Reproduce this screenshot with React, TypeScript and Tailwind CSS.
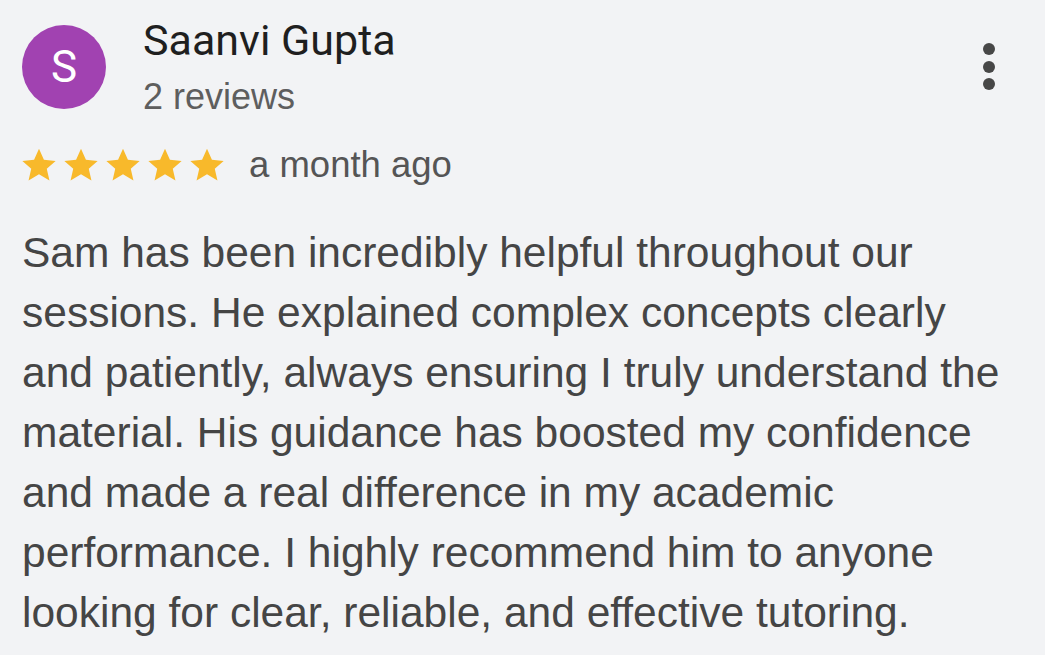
const Star = () => (
  <svg viewBox="0 0 24 24" className="w-[38px] h-[38px]" fill="#f8b92b">
    <path d="M12 1.8l3.1 6.9 7.4.7-5.6 5 1.7 7.4L12 17.9l-6.6 3.9 1.7-7.4-5.6-5 7.4-.7z" />
  </svg>
);

export default function App() {
  return (
    <div className="w-[1045px] h-[655px] bg-[#f2f3f5] overflow-hidden pl-[22px] pt-[25px] [font-family:'Liberation_Sans',Arial,sans-serif]">
      <div className="flex items-start">
        <div className="w-[84px] h-[84px] rounded-full bg-[#a142b1] flex items-center justify-center text-white text-[44px] [font-family:Roboto,sans-serif] leading-none">
          S
        </div>
        <div className="ml-[37px] flex-1">
          <div className="text-[43px] leading-[48px] text-[#1f1f1f] [font-family:Roboto,sans-serif] -mt-[9px]">Saanvi Gupta</div>
          <div className="text-[36px] leading-[40px] text-[#5e5e5e] mt-[13px]">2 reviews</div>
        </div>
        <div className="mr-[50px] mt-[18px] flex flex-col gap-[5.5px]">
          <span className="w-[12px] h-[12px] rounded-full bg-[#474747]" />
          <span className="w-[12px] h-[12px] rounded-full bg-[#474747]" />
          <span className="w-[12px] h-[12px] rounded-full bg-[#474747]" />
        </div>
      </div>
      <div className="flex items-center mt-[28px]">
        <div className="flex gap-[4px] -ml-[2px]">
          <Star />
          <Star />
          <Star />
          <Star />
          <Star />
        </div>
        <span className="ml-[23px] text-[36.5px] leading-[40px] text-[#555555]">a month ago</span>
      </div>
      <p className="mt-[38px] w-[985px] text-[42.5px] leading-[60px] text-[#454545]">
        Sam has been incredibly helpful throughout our sessions. He explained complex concepts clearly and patiently, always ensuring I truly understand the material. His guidance has boosted my confidence and made a real difference in my academic performance. I highly recommend him to anyone looking for clear, reliable, and effective tutoring.
      </p>
    </div>
  );
}
